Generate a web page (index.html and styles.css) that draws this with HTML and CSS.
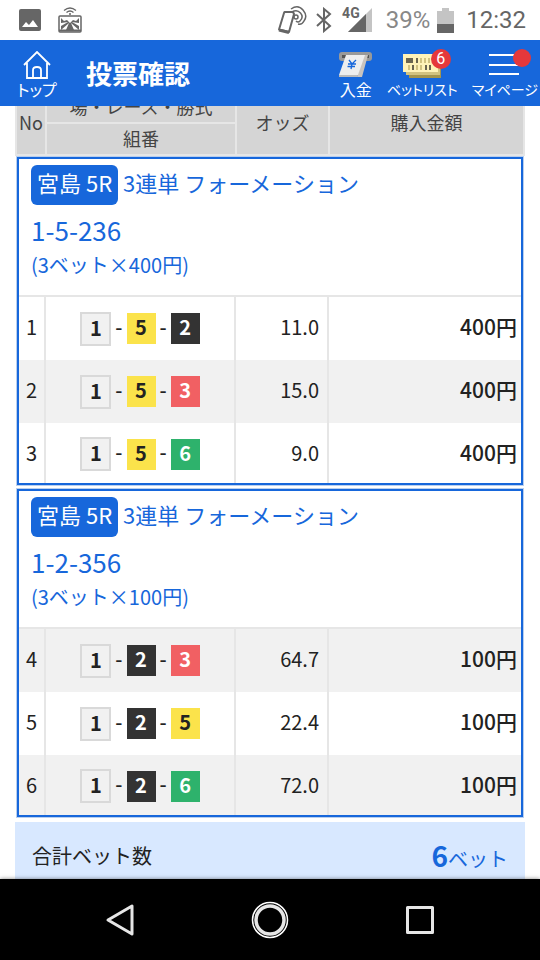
FILE: index.html
```html
<!DOCTYPE html>
<html lang="ja">
<head>
  <meta charset="UTF-8" />
  <meta name="viewport" content="width=device-width, initial-scale=1" />
  <title>投票確認</title>
  <link rel="stylesheet" href="styles.css">
</head>
<body>
  <div class="status-bar">
    <div class="status-left">
      <svg width="22" height="22" viewBox="0 0 22 22">
        <rect width="22" height="22" rx="2" fill="#666" />
        <path d="M3 18l4-5 3 3 4-5 5 7z" fill="#fff" />
      </svg>
      <svg width="24" height="26" viewBox="0 0 24 26" fill="none" stroke="#666">
        <path d="M6 3.500q6-5 12 0M8.500 5.500q3.500-3 7 0" stroke-width="1.300" />
        <circle cx="12" cy="7" r="1" fill="#666" stroke="none" />
        <rect x="1" y="9" width="22" height="16" rx="1" stroke-width="1.500" />
        <path d="M3 11l3 3 3-1 3 3 3-3 3 1 3-3v5l-7-1 7 4v4l-8-7 3 7h-8l3-7-8 7v-4l7-4-7 1z" fill="#666" stroke="none" />
        <path d="M1 23.500h22" stroke-width="2" />
      </svg>
    </div>
    <div class="status-right">
      <svg width="30" height="30" viewBox="0 0 30 30" fill="none" stroke="#666">
        <path d="M7.500 7H16l1 2-5 18-10-2.500L7 8z" stroke-width="2" stroke-linejoin="round" />
        <path d="M2 25l10 2.500" stroke-width="3" />
        <path d="M14 4q7-5 12 1t1 11q-2 4-6 3" stroke-width="1.500" />
        <path d="M15 7q5-3 8.500 1t-.5 8q-2 2-4 0" stroke-width="1.500" />
        <circle cx="19" cy="12" r="2" stroke-width="1.500" />
      </svg>
      <svg class="bluetooth" width="16" height="26" viewBox="0 0 16 26" fill="none" stroke="#666" stroke-width="2">
        <path d="M1 7l13 12-6 5V2l6 5L1 19" />
      </svg>
      <span class="network">4G</span>
      <svg class="signal" width="24" height="24" viewBox="0 0 24 24">
        <path d="M0 24L24 0v24z" fill="#c4c4c4" />
        <path d="M0 24L18 6v18z" fill="#666" />
      </svg>
      <span class="battery-text">39%</span>
      <svg width="17" height="25" viewBox="0 0 17 25">
        <path d="M5 0h7v3h5v13H0V3h5z" fill="#c4c4c4" />
        <path d="M0 16h17v9H0z" fill="#666" />
      </svg>
      <span class="clock">12:32</span>
    </div>
  </div>

  <header class="header">
    <a href="#" class="header-link home">
      <svg width="28" height="28" viewBox="0 0 28 28" fill="none" stroke="#fff" stroke-width="1.800">
        <path d="M1 14L14 1l13 13M4 12v15h6v-8q0-3 4-3t4 3v8h6V12M10 27h8" />
      </svg>
      <span>トップ</span>
    </a>
    <h1 class="title">投票確認</h1>
    <nav class="header-nav">
      <a href="#" class="header-link deposit">
        <svg width="34" height="28" viewBox="0 0 34 28">
          <rect x="0" y="1" width="33" height="9" rx="3" fill="#999" />
          <rect x="3" y="4" width="27" height="3" fill="#555" />
          <path d="M24 4h5l-6 22h-5z" fill="#c9c4bf" />
          <path d="M7 4h19l-7 20H0z" fill="#eee" />
          <path d="M0 24h19l-1 2H0z" fill="#bbb" />
          <path d="M10 9l3 4 4-4M13 13l-1 5M9 13h8M8.500 15.500h7.500" fill="none" stroke="#1767db" stroke-width="1.300" />
        </svg>
        <span>入金</span>
      </a>
      <a href="#" class="header-link betlist">
        <svg width="40" height="28" viewBox="0 0 40 28">
          <path d="M7 8h32v19H7z" fill="#a4954e" />
          <path d="M4 6h34v18H4z" fill="#d2c380" />
          <path d="M1 3h35v18H1z" fill="#fff3b8" />
          <path d="M4 7h7v5H4zM14 7h2v5h-2zM27 14h2v5h-2zM10 14h2v5h-2zM23 14h2v5h-2z" fill="#6b6650" />
          <path d="M18 7h2v5h-2zM22 7h2v5h-2zM26 7h2v5h-2zM6 14h2v5H6zM14 14h2v5h-2zM18 14h2v5h-2z" fill="#d2c380" />
        </svg>
        <span class="badge">6</span>
        <span>ベットリスト</span>
      </a>
      <a href="#" class="header-link mypage">
        <svg width="32" height="28" viewBox="0 0 32 28" stroke="#fff" stroke-width="2">
          <path d="M0 4h30M0 14h30M0 23h30" />
        </svg>
        <span class="badge dot"></span>
        <span>マイページ</span>
      </a>
    </nav>
  </header>

  <main class="content">
    <table class="bet-head">
      <colgroup><col class="col-no"><col class="col-comb"><col class="col-odds"><col></colgroup>
      <thead>
        <tr><th rowspan="2">No</th><th>場・レース・勝式</th><th rowspan="2">オッズ</th><th rowspan="2">購入金額</th></tr>
        <tr><th>組番</th></tr>
      </thead>
    </table>

    <section class="bet">
      <div class="bet-info">
        <h2><span class="race">宮島 5R</span>3連単 フォーメーション</h2>
        <p class="numbers">1-5-236</p>
        <p class="count">(3ベット×400円)</p>
      </div>
      <table class="bet-table">
        <colgroup><col class="col-no"><col class="col-comb"><col class="col-odds"><col></colgroup>
        <tbody>
          <tr>
            <td class="no">1</td>
            <td><div class="comb"><span class="boat b1">1</span><span class="hyphen">-</span><span class="boat b5">5</span><span class="hyphen">-</span><span class="boat b2">2</span></div></td>
            <td class="odds">11.0</td>
            <td class="price">400円</td>
          </tr>
          <tr class="gray">
            <td class="no">2</td>
            <td><div class="comb"><span class="boat b1">1</span><span class="hyphen">-</span><span class="boat b5">5</span><span class="hyphen">-</span><span class="boat b3">3</span></div></td>
            <td class="odds">15.0</td>
            <td class="price">400円</td>
          </tr>
          <tr>
            <td class="no">3</td>
            <td><div class="comb"><span class="boat b1">1</span><span class="hyphen">-</span><span class="boat b5">5</span><span class="hyphen">-</span><span class="boat b6">6</span></div></td>
            <td class="odds">9.0</td>
            <td class="price">400円</td>
          </tr>
        </tbody>
      </table>
    </section>

    <section class="bet">
      <div class="bet-info">
        <h2><span class="race">宮島 5R</span>3連単 フォーメーション</h2>
        <p class="numbers">1-2-356</p>
        <p class="count">(3ベット×100円)</p>
      </div>
      <table class="bet-table">
        <colgroup><col class="col-no"><col class="col-comb"><col class="col-odds"><col></colgroup>
        <tbody>
          <tr class="gray">
            <td class="no">4</td>
            <td><div class="comb"><span class="boat b1">1</span><span class="hyphen">-</span><span class="boat b2">2</span><span class="hyphen">-</span><span class="boat b3">3</span></div></td>
            <td class="odds">64.7</td>
            <td class="price">100円</td>
          </tr>
          <tr>
            <td class="no">5</td>
            <td><div class="comb"><span class="boat b1">1</span><span class="hyphen">-</span><span class="boat b2">2</span><span class="hyphen">-</span><span class="boat b5">5</span></div></td>
            <td class="odds">22.4</td>
            <td class="price">100円</td>
          </tr>
          <tr class="gray">
            <td class="no">6</td>
            <td><div class="comb"><span class="boat b1">1</span><span class="hyphen">-</span><span class="boat b2">2</span><span class="hyphen">-</span><span class="boat b6">6</span></div></td>
            <td class="odds">72.0</td>
            <td class="price">100円</td>
          </tr>
        </tbody>
      </table>
    </section>

    <div class="total">
      <span>合計ベット数</span>
      <span class="total-value"><strong>6</strong>ベット</span>
    </div>
  </main>

  <div class="nav-bar">
    <button type="button" aria-label="戻る">
      <svg width="40" height="40" viewBox="0 0 40 40" fill="none" stroke="#e6e6e6" stroke-width="3" stroke-linejoin="round">
        <path d="M8 20L32 6v28z" />
      </svg>
    </button>
    <button type="button" aria-label="ホーム">
      <svg width="40" height="40" viewBox="0 0 40 40" fill="none" stroke="#fff">
        <circle cx="20" cy="20" r="17.500" stroke-width="1.500" />
        <circle cx="20" cy="20" r="14" stroke="#e6e6e6" stroke-width="3.500" />
      </svg>
    </button>
    <button type="button" aria-label="履歴">
      <svg width="40" height="40" viewBox="0 0 40 40" fill="none" stroke="#e6e6e6" stroke-width="3" stroke-linejoin="round">
        <rect x="7.500" y="7.500" width="25" height="25" />
      </svg>
    </button>
  </div>
</body>
</html>
```
FILE: styles.css
```css
* {
  margin: 0;
  padding: 0;
  box-sizing: border-box;
}

body {
  font-family: 'Noto Sans CJK JP', sans-serif;
  background: #fff;
  color: #222;
  font-size: 20px;
  height: 100vh;
  display: flex;
  flex-direction: column;
}

/* status bar */
.status-bar {
  height: 40px;
  flex-shrink: 0;
  display: flex;
  justify-content: space-between;
  align-items: center;
  padding: 0 14px 0 19px;
  font-family: Roboto, sans-serif;
  color: #666;
}

.status-left,
.status-right {
  display: flex;
  align-items: center;
}

.status-left {
  gap: 17px;
}

.bluetooth {
  margin-left: 9px;
}

.network {
  font-size: 14px;
  font-weight: 700;
  align-self: flex-start;
  margin-left: 10px;
}

.signal {
  margin-left: -12px;
}

.battery-text {
  font-size: 24px;
  color: #888;
  margin: 0 7px 0 14px;
}

.clock {
  font-size: 24px;
  margin-left: 12px;
}

/* header */
.header {
  height: 66px;
  flex-shrink: 0;
  display: flex;
  align-items: center;
  background: #1767db;
  color: #fff;
  position: relative;
  z-index: 1;
}

.header-link {
  position: relative;
  display: flex;
  flex-direction: column;
  align-items: center;
  padding-top: 4px;
  color: #fff;
  text-decoration: none;
  font-size: 16px;
  line-height: 20px;
  white-space: nowrap;
  font-feature-settings: "palt";
}

.home {
  width: 74px;
}

.betlist,
.mypage {
  font-size: 14px;
}

.title {
  font-size: 26px;
  line-height: 40px;
  margin-left: 12px;
}

.header-nav {
  display: flex;
  align-items: center;
  gap: 14px;
  margin-left: auto;
  padding-right: 2px;
}

.badge {
  position: absolute;
  top: 2px;
  right: 7px;
  width: 20px;
  height: 20px;
  border-radius: 50%;
  background: #e5383b;
  font-family: Roboto, sans-serif;
  font-size: 16px;
  text-align: center;
}

.dot {
  width: 18px;
  height: 18px;
}

/* bet list */
.content {
  flex: 1;
  min-height: 0;
  overflow: hidden;
  padding: 0 15px;
}

table {
  width: 100%;
  table-layout: fixed;
  border-collapse: collapse;
}

.bet-head {
  margin-top: -16px;
}

.bet-head th {
  height: 32px;
  padding-bottom: 2px;
  background: #d5d5d5;
  border: 2px solid #e6e6e6;
  color: #444;
  font-size: 18px;
  font-weight: 400;
  line-height: 26px;
}

.col-no {
  width: 26px;
}

.bet-head .col-no {
  width: 30px;
}

.col-comb {
  width: 190px;
}

.col-odds {
  width: 93px;
}

.bet {
  margin: 1px 2px 4px;
  border: 2px solid #1767db;
  box-shadow: 0 0 0 1px #b9cfee;
}

.bet-info {
  height: 138px;
  padding: 6px 12px;
  border-bottom: 2px solid #e6e6e6;
  color: #1767db;
}

.bet-info h2 {
  display: flex;
  align-items: flex-start;
  font-size: 22px;
  font-weight: 400;
  line-height: 34px;
}

.race {
  padding: 0 6px 6px;
  margin-right: 5px;
  border-radius: 6px;
  background: #1767db;
  color: #fff;
}

.numbers {
  margin-top: 5px;
  font-size: 26px;
  line-height: 40px;
}

.count {
  line-height: 30px;
}

.bet-table td {
  height: 63px;
  padding-bottom: 4px;
}

.bet-table tr:last-child td {
  height: 60px;
  padding-bottom: 2px;
}

.bet-table td + td {
  border-left: 2px solid #e6e6e6;
}

.gray {
  background: #f1f1f1;
}

.no {
  text-align: center;
}

.comb {
  display: flex;
  justify-content: center;
  align-items: center;
  gap: 4px;
  padding-top: 4px;
}

.hyphen {
  padding-bottom: 5px;
  font-weight: 500;
}

.boat {
  width: 29px;
  height: 31px;
  line-height: 27px;
  text-align: center;
  font-weight: 700;
}

.b1 {
  width: 31px;
  height: 34px;
  background: #f1f1f1;
  border: 2px solid #d9d9d9;
}

.b2 {
  background: #333;
  color: #fff;
}

.b3 {
  background: #f16063;
  color: #fff;
}

.b5 {
  background: #fbe34b;
}

.b6 {
  background: #2eb26c;
  color: #fff;
}

.bet-table .odds {
  padding-right: 8px;
  text-align: right;
}

.bet-table .price {
  padding-right: 4px;
  padding-bottom: 6px;
  text-align: right;
  font-size: 21px;
  font-weight: 500;
}

.total {
  display: flex;
  justify-content: space-between;
  align-items: center;
  height: 66px;
  margin-top: 5px;
  padding: 0 17px;
  background: #d8e8ff;
}

.total-value {
  color: #1767db;
}

.total-value strong {
  font-size: 28px;
}

/* navigation bar */
.nav-bar {
  height: 81px;
  flex-shrink: 0;
  display: flex;
  justify-content: center;
  align-items: center;
  gap: 110px;
  background: #000;
  box-shadow: 0 0 4px rgba(0, 0, 0, 0.5);
  position: relative;
}

.nav-bar button {
  background: none;
  border: none;
  line-height: 0;
}
```
